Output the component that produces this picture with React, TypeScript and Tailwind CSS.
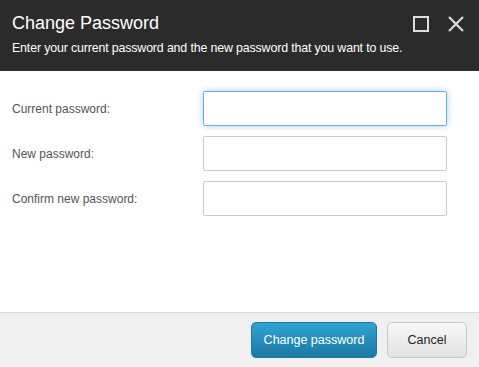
import React from "react";

export default function App() {
  const rows = ["Current password:", "New password:", "Confirm new password:"];
  return (
    <div className="w-[479px] h-[367px] flex flex-col bg-white font-['Liberation_Sans',Arial,sans-serif]">
      <div className="h-[71px] bg-[#2b2b2b] relative px-[12px] pt-[12px]">
        <div className="text-[18px] leading-[22px] text-white">Change Password</div>
        <div className="text-[12.4px] leading-[15px] text-white mt-[7px] tracking-[-0.15px]">
          Enter your current password and the new password that you want to use.
        </div>
        <div className="absolute top-[16px] left-[413px] w-[16px] h-[16px] border-2 border-[#dcdcdc]" />
        <svg className="absolute top-[16px] left-[448px]" width="16" height="16" viewBox="0 0 16 16">
          <path d="M1 1 L15 15 M15 1 L1 15" stroke="#dcdcdc" strokeWidth="2.2" fill="none" />
        </svg>
      </div>
      <div className="flex-1 flex flex-col gap-[10px] pt-[20px]">
        {rows.map((r, i) => (
          <div key={r} className="flex items-center">
            <div className="w-[203px] pl-[12px] text-[12px] text-[#555]">{r}</div>
            <input
              type="password"
              className={
                "w-[244px] h-[35px] rounded-[2px] bg-white outline-none border " +
                (i === 0
                  ? "border-[#66afe9] shadow-[0_0_6px_rgba(102,175,233,0.6)]"
                  : "border-[#cccccc]")
              }
            />
          </div>
        ))}
      </div>
      <div className="h-[55px] bg-[#f0f0f0] border-t border-[#dddddd] flex items-start justify-end gap-[10px] pt-[9px] pr-[12px]">
        <button className="w-[126px] h-[36px] rounded-[5px] text-white text-[12.5px] bg-gradient-to-b from-[#2fa4d2] to-[#1d78a3] border border-[#1e7aa6]">
          Change password
        </button>
        <button className="w-[80px] h-[36px] rounded-[5px] text-[#222] text-[12.5px] bg-gradient-to-b from-[#f8f8f8] to-[#e2e2e2] border border-[#c8c8c8]">
          Cancel
        </button>
      </div>
    </div>
  );
}
